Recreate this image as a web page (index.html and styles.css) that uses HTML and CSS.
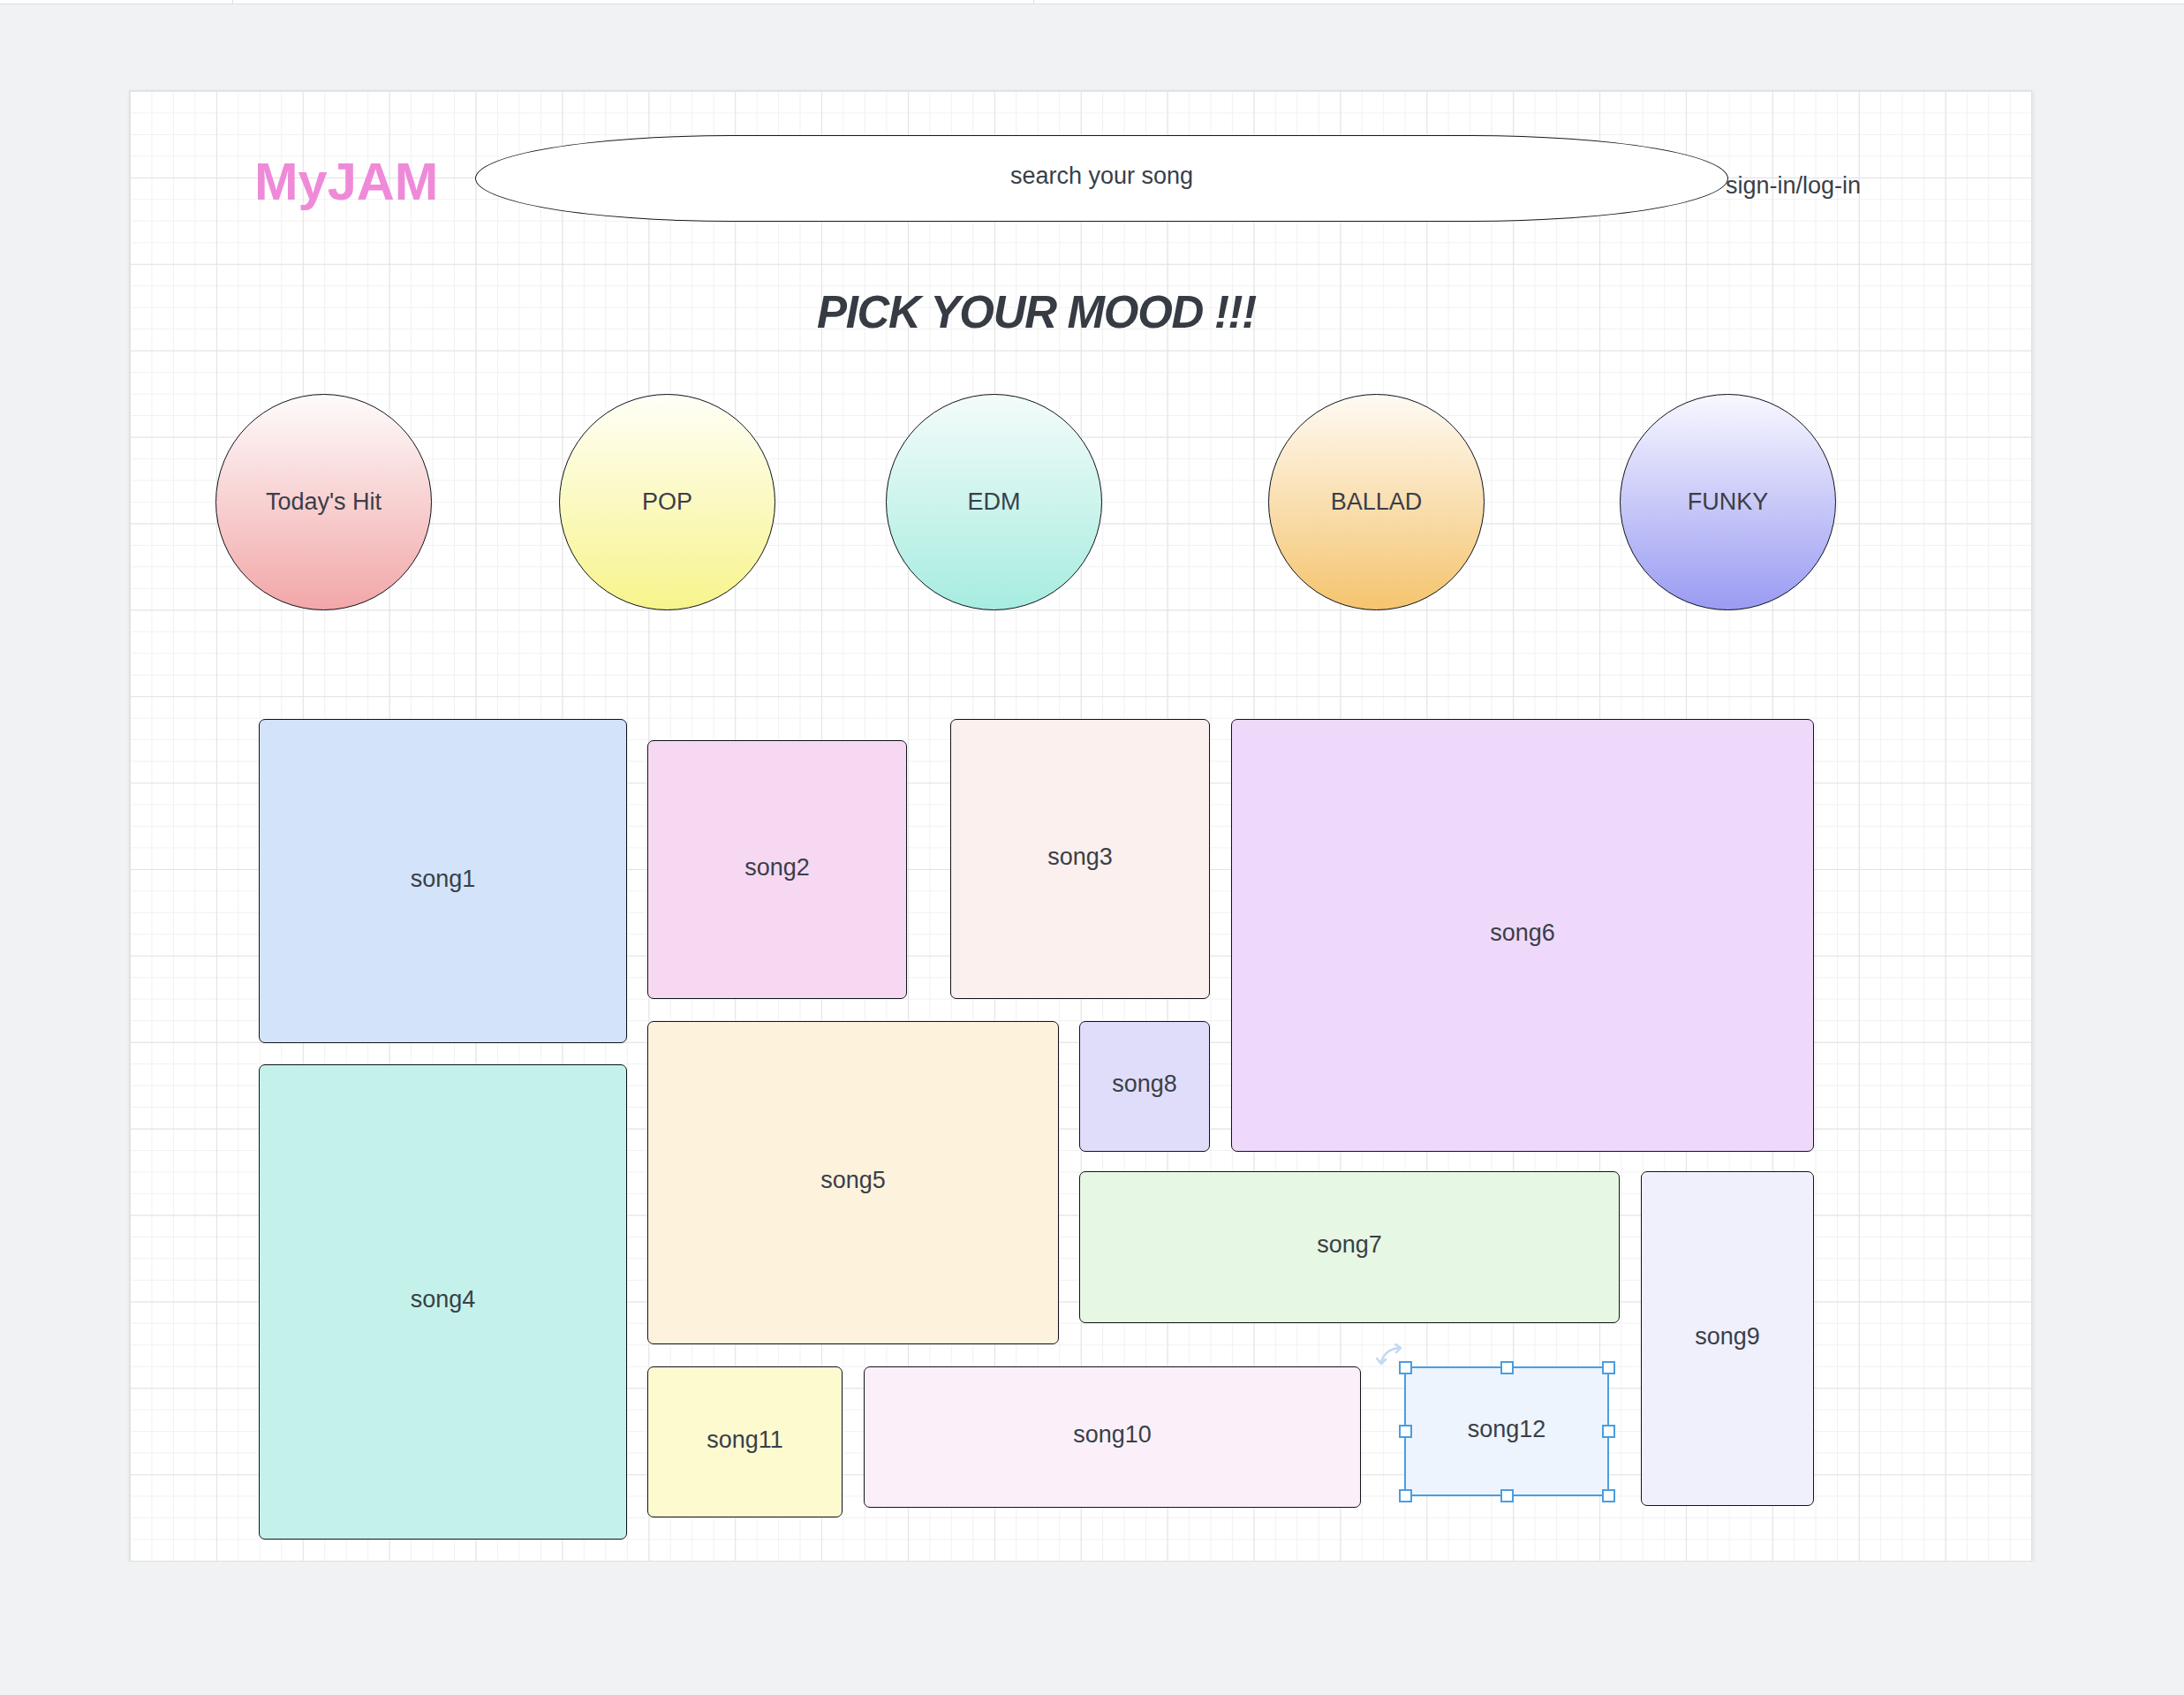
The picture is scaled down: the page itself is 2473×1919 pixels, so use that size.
FILE: index.html
```html
<!DOCTYPE html>
<html lang="en">
<head>
  <meta charset="UTF-8">
  <title>MyJAM wireframe</title>
  <link rel="stylesheet" href="styles.css">
</head>
<body>

<!-- toolbar strip of the editor -->
<div class="topbar">
  <span class="sep sep-a"></span>
  <span class="sep sep-b"></span>
</div>

<div class="canvas">
  <!-- header: logo, search, sign in -->
  <div class="header">
    <div class="logo">MyJAM</div>
    <div class="search">search your song</div>
    <div class="signin">sign-in/log-in</div>
  </div>

  <h1 class="title">PICK YOUR MOOD !!!</h1>

  <!-- mood circles -->
  <div class="moods">
    <div class="mood mood-hit">Today's Hit</div>
    <div class="mood mood-pop">POP</div>
    <div class="mood mood-edm">EDM</div>
    <div class="mood mood-ballad">BALLAD</div>
    <div class="mood mood-funky">FUNKY</div>
  </div>

  <!-- song tiles -->
  <div class="songs">
    <div class="song s1">song1</div>
    <div class="song s2">song2</div>
    <div class="song s3">song3</div>
    <div class="song s6">song6</div>
    <div class="song s4">song4</div>
    <div class="song s5">song5</div>
    <div class="song s8">song8</div>
    <div class="song s7">song7</div>
    <div class="song s9">song9</div>
    <div class="song s11">song11</div>
    <div class="song s10">song10</div>
    <div class="song s12">
      song12
      <svg class="rotate" width="32" height="26" viewBox="0 0 32 26">
        <path d="M6 21 Q10 7 26 5" fill="none" stroke="#c4d8f2" stroke-width="2.6" stroke-linecap="round"/>
        <path d="M1 17 L6 23 L11 18" fill="none" stroke="#c4d8f2" stroke-width="2.6" stroke-linecap="round" stroke-linejoin="round"/>
        <path d="M22 1 L28 5 L23 10" fill="none" stroke="#c4d8f2" stroke-width="2.6" stroke-linecap="round" stroke-linejoin="round"/>
      </svg>
      <span class="handle h-tl"></span>
      <span class="handle h-tc"></span>
      <span class="handle h-tr"></span>
      <span class="handle h-ml"></span>
      <span class="handle h-mr"></span>
      <span class="handle h-bl"></span>
      <span class="handle h-bc"></span>
      <span class="handle h-br"></span>
    </div>
  </div>
</div>

</body>
</html>
```

FILE: styles.css
```css
* {
  box-sizing: border-box;
}

body {
  margin: 0;
  padding: 0;
  background-color: #f1f2f4;
  font-family: "Liberation Sans", Arial, sans-serif;
  color: #3a3f48;
}

.topbar {
  position: relative;
  height: 5px;
  background-color: #fff;
  border-bottom: 1px solid #dcdfe3;
}

.sep {
  position: absolute;
  top: 0;
  width: 1px;
  height: 4px;
  background-color: #dcdfe3;
}

.sep-a { left: 263px; }
.sep-b { left: 1170px; }

.canvas {
  width: 2155px;
  height: 1666px;
  margin: 97px 0 0 146px;
  border: 1px solid #dfe1e4;
  box-shadow: 1px 2px 5px rgba(0, 0, 0, 0.08);
  background-color: #fff;
  background-image:
    linear-gradient(to right, #e3e3e3 1px, transparent 1px),
    linear-gradient(to bottom, #e3e3e3 1px, transparent 1px),
    linear-gradient(to right, #f1f1f1 1px, transparent 1px),
    linear-gradient(to bottom, #f1f1f1 1px, transparent 1px);
  background-size: 97.9px 97.9px, 97.9px 97.9px, 24.475px 24.475px, 24.475px 24.475px;
  display: flex;
  flex-direction: column;
}

/* header */
.header {
  display: flex;
  align-items: flex-start;
  padding: 50px 0 0 141px;
}

.logo {
  width: 250px;
  margin-top: 19px;
  font-size: 59.5px;
  line-height: 68px;
  font-weight: bold;
  color: #ef8ad8;
}

.search {
  width: 1419px;
  height: 98px;
  display: flex;
  align-items: center;
  justify-content: center;
  padding-bottom: 5px;
  border: 1px solid #161a21;
  border-radius: 290px / 49px;
  background-color: #fff;
  font-size: 27px;
}

.signin {
  margin: 42px 0 0 -3px;
  font-size: 27px;
  line-height: 31px;
}

.title {
  margin: 74px 0 0 778px;
  font-size: 51px;
  line-height: 58px;
  font-weight: bold;
  font-style: italic;
  letter-spacing: -1.3px;
  color: #363b44;
}

/* moods */
.moods {
  display: flex;
  margin-top: 63px;
  padding-left: 97px;
}

.mood {
  width: 245px;
  height: 245px;
  border: 1px solid #0e121b;
  border-radius: 50%;
  display: flex;
  align-items: center;
  justify-content: center;
  font-size: 27px;
}

.mood-hit { background: linear-gradient(#fefbfb, #f2a7a8); }
.mood-pop { margin-left: 144px; background: linear-gradient(#fffff7, #f7f48c); }
.mood-edm { margin-left: 125px; background: linear-gradient(#f3fcfa, #a7ece0); }
.mood-ballad { margin-left: 188px; background: linear-gradient(#fefaf3, #f5c46e); }
.mood-funky { margin-left: 153px; background: linear-gradient(#f8f8ff, #9a9bf2); }

/* songs */
.songs {
  display: grid;
  margin: 123px 0 0 146px;
  grid-template-columns: 417px 23px 221px 24px 49px 49px 123px 23px 148px 24px 147px 49px 232px 12px 24px 196px;
  grid-template-rows: 24px 293px 25px 25px 24px 99px 22px 172px 24px 25px 147px 11px 2px 11px 25px;
}

.song {
  display: flex;
  align-items: center;
  justify-content: center;
  padding-bottom: 5px;
  border: 1px solid #0f131a;
  border-radius: 7px;
  font-size: 27px;
}

.s1 { grid-column: 1 / 2; grid-row: 1 / 5; background-color: #d3e3fa; }
.s2 { grid-column: 3 / 6; grid-row: 2 / 3; background-color: #f7d8f2; }
.s3 { grid-column: 7 / 10; grid-row: 1 / 3; background-color: #fbf0ee; }
.s6 { grid-column: 11 / 17; grid-row: 1 / 7; background-color: #eed9fb; }
.s4 { grid-column: 1 / 2; grid-row: 6 / 16; background-color: #c4f2eb; }
.s5 { grid-column: 3 / 8; grid-row: 4 / 10; background-color: #fdf2dc; }
.s8 { grid-column: 9 / 10; grid-row: 4 / 7; background-color: #e0ddfa; }
.s7 { grid-column: 9 / 15; grid-row: 8 / 9; background-color: #e6f7e3; }
.s9 { grid-column: 16 / 17; grid-row: 8 / 13; background-color: #f0effc; }
.s11 { grid-column: 3 / 4; grid-row: 11 / 15; background-color: #fdfad0; }
.s10 { grid-column: 5 / 12; grid-row: 11 / 14; background-color: #fbf0fa; }

.s12 {
  grid-column: 13 / 14;
  grid-row: 11 / 12;
  position: relative;
  border: 2px solid #4a9de2;
  border-radius: 0;
  background-color: #edf4fd;
}

.rotate {
  position: absolute;
  left: -34px;
  top: -28px;
}

.handle {
  position: absolute;
  width: 15px;
  height: 15px;
  margin: -7.5px 0 0 -7.5px;
  border: 2px solid #4a9de2;
  background-color: #fff;
}

.h-tl { left: -1px; top: -1px; }
.h-tc { left: 50%; top: -1px; }
.h-tr { left: calc(100% + 1px); top: -1px; }
.h-ml { left: -1px; top: 50%; }
.h-mr { left: calc(100% + 1px); top: 50%; }
.h-bl { left: -1px; top: calc(100% + 1px); }
.h-bc { left: 50%; top: calc(100% + 1px); }
.h-br { left: calc(100% + 1px); top: calc(100% + 1px); }
```
